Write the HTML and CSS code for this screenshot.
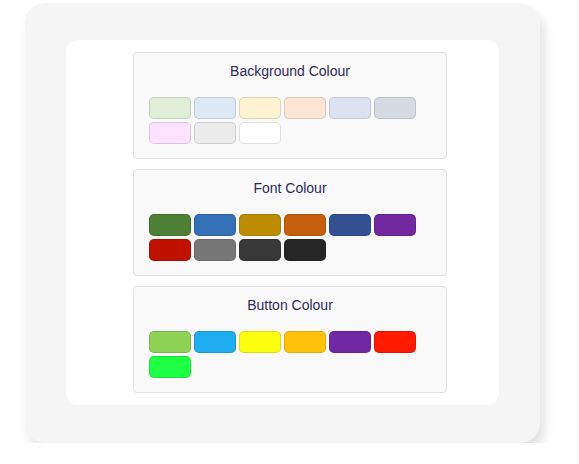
FILE: index.html
```html
<!DOCTYPE html>
<html>
<head>
<meta charset="utf-8">
<link rel="stylesheet" href="styles.css">
</head>
<body>
<div class="frame">
  <div class="panel">
    <div class="section">
      <div class="title">Background Colour</div>
      <div class="swatches">
        <span class="sw" style="background:#e0eed8"></span>
        <span class="sw" style="background:#dde8f5"></span>
        <span class="sw" style="background:#fff2d0"></span>
        <span class="sw" style="background:#fde5d6"></span>
        <span class="sw" style="background:#dde2f3"></span>
        <span class="sw" style="background:#d5dae3"></span>
        <span class="sw" style="background:#fde2fd"></span>
        <span class="sw" style="background:#ececec"></span>
        <span class="sw" style="background:#ffffff"></span>
      </div>
    </div>
    <div class="section">
      <div class="title">Font Colour</div>
      <div class="swatches">
        <span class="sw" style="background:#4d7f35"></span>
        <span class="sw" style="background:#3570b7"></span>
        <span class="sw" style="background:#bd8e05"></span>
        <span class="sw" style="background:#c55e0d"></span>
        <span class="sw" style="background:#335193"></span>
        <span class="sw" style="background:#7229a0"></span>
        <span class="sw" style="background:#be1100"></span>
        <span class="sw" style="background:#777777"></span>
        <span class="sw" style="background:#383838"></span>
        <span class="sw" style="background:#262626"></span>
      </div>
    </div>
    <div class="section">
      <div class="title">Button Colour</div>
      <div class="swatches">
        <span class="sw" style="background:#8dd255"></span>
        <span class="sw" style="background:#1fadef"></span>
        <span class="sw" style="background:#fdfd0f"></span>
        <span class="sw" style="background:#ffc20a"></span>
        <span class="sw" style="background:#7228a3"></span>
        <span class="sw" style="background:#ff1a00"></span>
        <span class="sw" style="background:#1eff45"></span>
      </div>
    </div>
  </div>
</div>
</body>
</html>
```
FILE: styles.css
```css
html, body {
  margin: 0;
  padding: 0;
  background: #ffffff;
}
body {
  font-family: "Liberation Sans", Arial, sans-serif;
}
.frame {
  box-sizing: border-box;
  margin: 3px 0 0 25px;
  width: 515px;
  height: 440px;
  padding: 37px 41px 38px 41px;
  background: #f5f5f5;
  border-radius: 20px;
  box-shadow: 4px 8px 12px rgba(0, 0, 0, 0.12);
}
.panel {
  box-sizing: border-box;
  height: 365px;
  background: #ffffff;
  border-radius: 12px;
  padding: 12px 0 0 67px;
  display: flex;
  flex-direction: column;
  gap: 10px;
}
.section {
  box-sizing: border-box;
  width: 314px;
  height: 107px;
  background: #f9f9f9;
  border: 1px solid #e2e2e2;
  border-radius: 4px;
  padding: 10px 0 0 15px;
}
.title {
  text-align: center;
  margin-left: -15px;
  font-size: 14px;
  line-height: 16px;
  color: #2e2b5a;
}
.swatches {
  margin-top: 18px;
  width: 272px;
  display: flex;
  flex-wrap: wrap;
  gap: 3px;
}
.sw {
  box-sizing: border-box;
  width: 42px;
  height: 22px;
  border-radius: 5px;
  border: 1px solid rgba(0, 0, 0, 0.12);
}
```
